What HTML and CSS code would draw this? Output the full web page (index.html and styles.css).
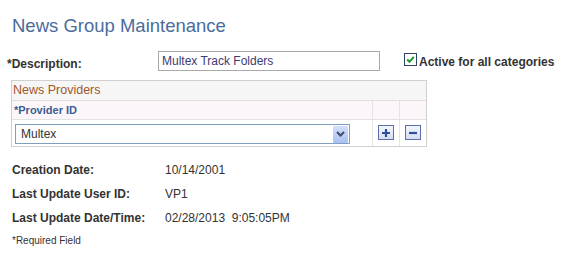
FILE: index.html
```html
<!DOCTYPE html>
<html>
<head>
<meta charset="utf-8">
<link rel="stylesheet" href="styles.css">
</head>
<body>
<div class="page">
  <h1 class="title">News Group Maintenance</h1>

  <div class="desc-row">
    <div class="desc-label">*Description:</div>
    <div class="text-input">Multex Track Folders</div>
    <div class="check-wrap">
      <span class="checkbox">
        <svg width="9" height="9" viewBox="0 0 9 9"><path d="M1.2 4.5 L3.5 6.8 L7.8 1.8" fill="none" stroke="#1f9a2a" stroke-width="2"/></svg>
      </span>
      <span class="check-label">Active for all categories</span>
    </div>
  </div>

  <div class="grid">
    <div class="grid-title">News Providers</div>
    <div class="grid-row grid-head">
      <div class="cell cell-main">*Provider ID</div>
      <div class="cell cell-btn"></div>
      <div class="cell cell-btn"></div>
    </div>
    <div class="grid-row grid-data">
      <div class="cell cell-main">
        <div class="select">
          <span class="select-text">Multex</span>
          <span class="select-btn">
            <svg width="9" height="6" viewBox="0 0 9 6"><path d="M1 1 L4.5 4.5 L8 1" fill="none" stroke="#3e4c6a" stroke-width="2"/></svg>
          </span>
        </div>
      </div>
      <div class="cell cell-btn">
        <span class="row-btn">
          <svg width="10" height="10" viewBox="0 0 10 10"><path d="M5 1 V9 M1 5 H9" stroke="#2f4ea0" stroke-width="2.2"/></svg>
        </span>
      </div>
      <div class="cell cell-btn">
        <span class="row-btn">
          <svg width="10" height="10" viewBox="0 0 10 10"><path d="M1 5 H9" stroke="#2f4ea0" stroke-width="2.2"/></svg>
        </span>
      </div>
    </div>
  </div>

  <div class="info">
    <div class="info-row"><span class="info-label">Creation Date:</span><span class="info-value">10/14/2001</span></div>
    <div class="info-row"><span class="info-label">Last Update User ID:</span><span class="info-value">VP1</span></div>
    <div class="info-row"><span class="info-label">Last Update Date/Time:</span><span class="info-value">02/28/2013&nbsp; 9:05:05PM</span></div>
  </div>

  <div class="required">*Required Field</div>
</div>
</body>
</html>
```

FILE: styles.css
```css
* { box-sizing: border-box; }

html, body {
  margin: 0;
  padding: 0;
  background: #ffffff;
}

body {
  font-family: "Liberation Sans", Arial, sans-serif;
  font-size: 12px;
  color: #333333;
}

.page {
  padding-top: 15px;
}

.title {
  margin: 0 0 0 12px;
  font-size: 18.5px;
  line-height: 22px;
  font-weight: normal;
  color: #4a6c9c;
}

.desc-row {
  display: flex;
  align-items: flex-start;
  margin-top: 14px;
  height: 20px;
}

.desc-label {
  width: 151px;
  margin-left: 7px;
  padding-top: 6px;
  line-height: 14px;
  font-weight: bold;
}

.text-input {
  width: 222px;
  height: 20px;
  border: 1px solid #a9a9a9;
  padding-left: 3px;
  line-height: 18px;
  color: #3e3a74;
}

.check-wrap {
  display: flex;
  align-items: flex-start;
  margin-left: 24px;
}

.checkbox {
  width: 13px;
  height: 13px;
  margin-top: 2px;
  border: 1px solid #2c4468;
  background: #fff;
  display: flex;
  align-items: center;
  justify-content: center;
}

.check-label {
  margin-left: 2px;
  padding-top: 4px;
  line-height: 14px;
  font-weight: bold;
}

.grid {
  margin: 9px 0 0 11px;
  width: 416px;
  border: 1px solid #d0d0d0;
}

.grid-title {
  height: 20px;
  line-height: 19px;
  padding-left: 1px;
  background: #f6f6f6;
  border-bottom: 1px solid #dedede;
  color: #a2582a;
  font-size: 12.5px;
}

.grid-row {
  display: grid;
  grid-template-columns: 360px 27px 27px;
}

.grid-head {
  height: 19px;
  background: #fcf6fb;
  border-bottom: 1px solid #e2e2e2;
}

.grid-head .cell-main {
  padding-left: 2px;
  line-height: 18px;
  font-size: 11px;
  font-weight: bold;
  color: #3d5d92;
}

.grid-data {
  height: 26px;
}

.cell-btn {
  border-left: 1px solid #e4e4e4;
  display: flex;
  justify-content: center;
  align-items: flex-start;
}

.grid-data .cell-main {
  padding: 4px 0 0 3px;
}

.select {
  width: 335px;
  height: 20px;
  border: 1px solid #7f9fbe;
  display: flex;
  align-items: center;
  justify-content: space-between;
  padding: 0 1px 0 5px;
}

.select-text {
  color: #333333;
  line-height: 18px;
}

.select-btn {
  width: 15px;
  height: 17px;
  background: linear-gradient(#d3e0fb, #a8c0f2);
  border-radius: 1px;
  display: flex;
  align-items: center;
  justify-content: center;
}

.grid-data .cell-btn {
  padding-top: 5px;
}

.row-btn {
  width: 16px;
  height: 15px;
  border: 1px solid #5b6fae;
  background: linear-gradient(#f4f6fc, #d4ddf1);
  display: flex;
  align-items: center;
  justify-content: center;
}

.info {
  margin-top: 11px;
}

.info-row {
  display: flex;
  height: 24px;
  line-height: 24px;
}

.info-label {
  width: 153px;
  margin-left: 12px;
  font-weight: bold;
}

.info-value {
  white-space: pre;
}

.required {
  margin: 4px 0 0 12px;
  font-size: 10px;
  line-height: 14px;
}
```
